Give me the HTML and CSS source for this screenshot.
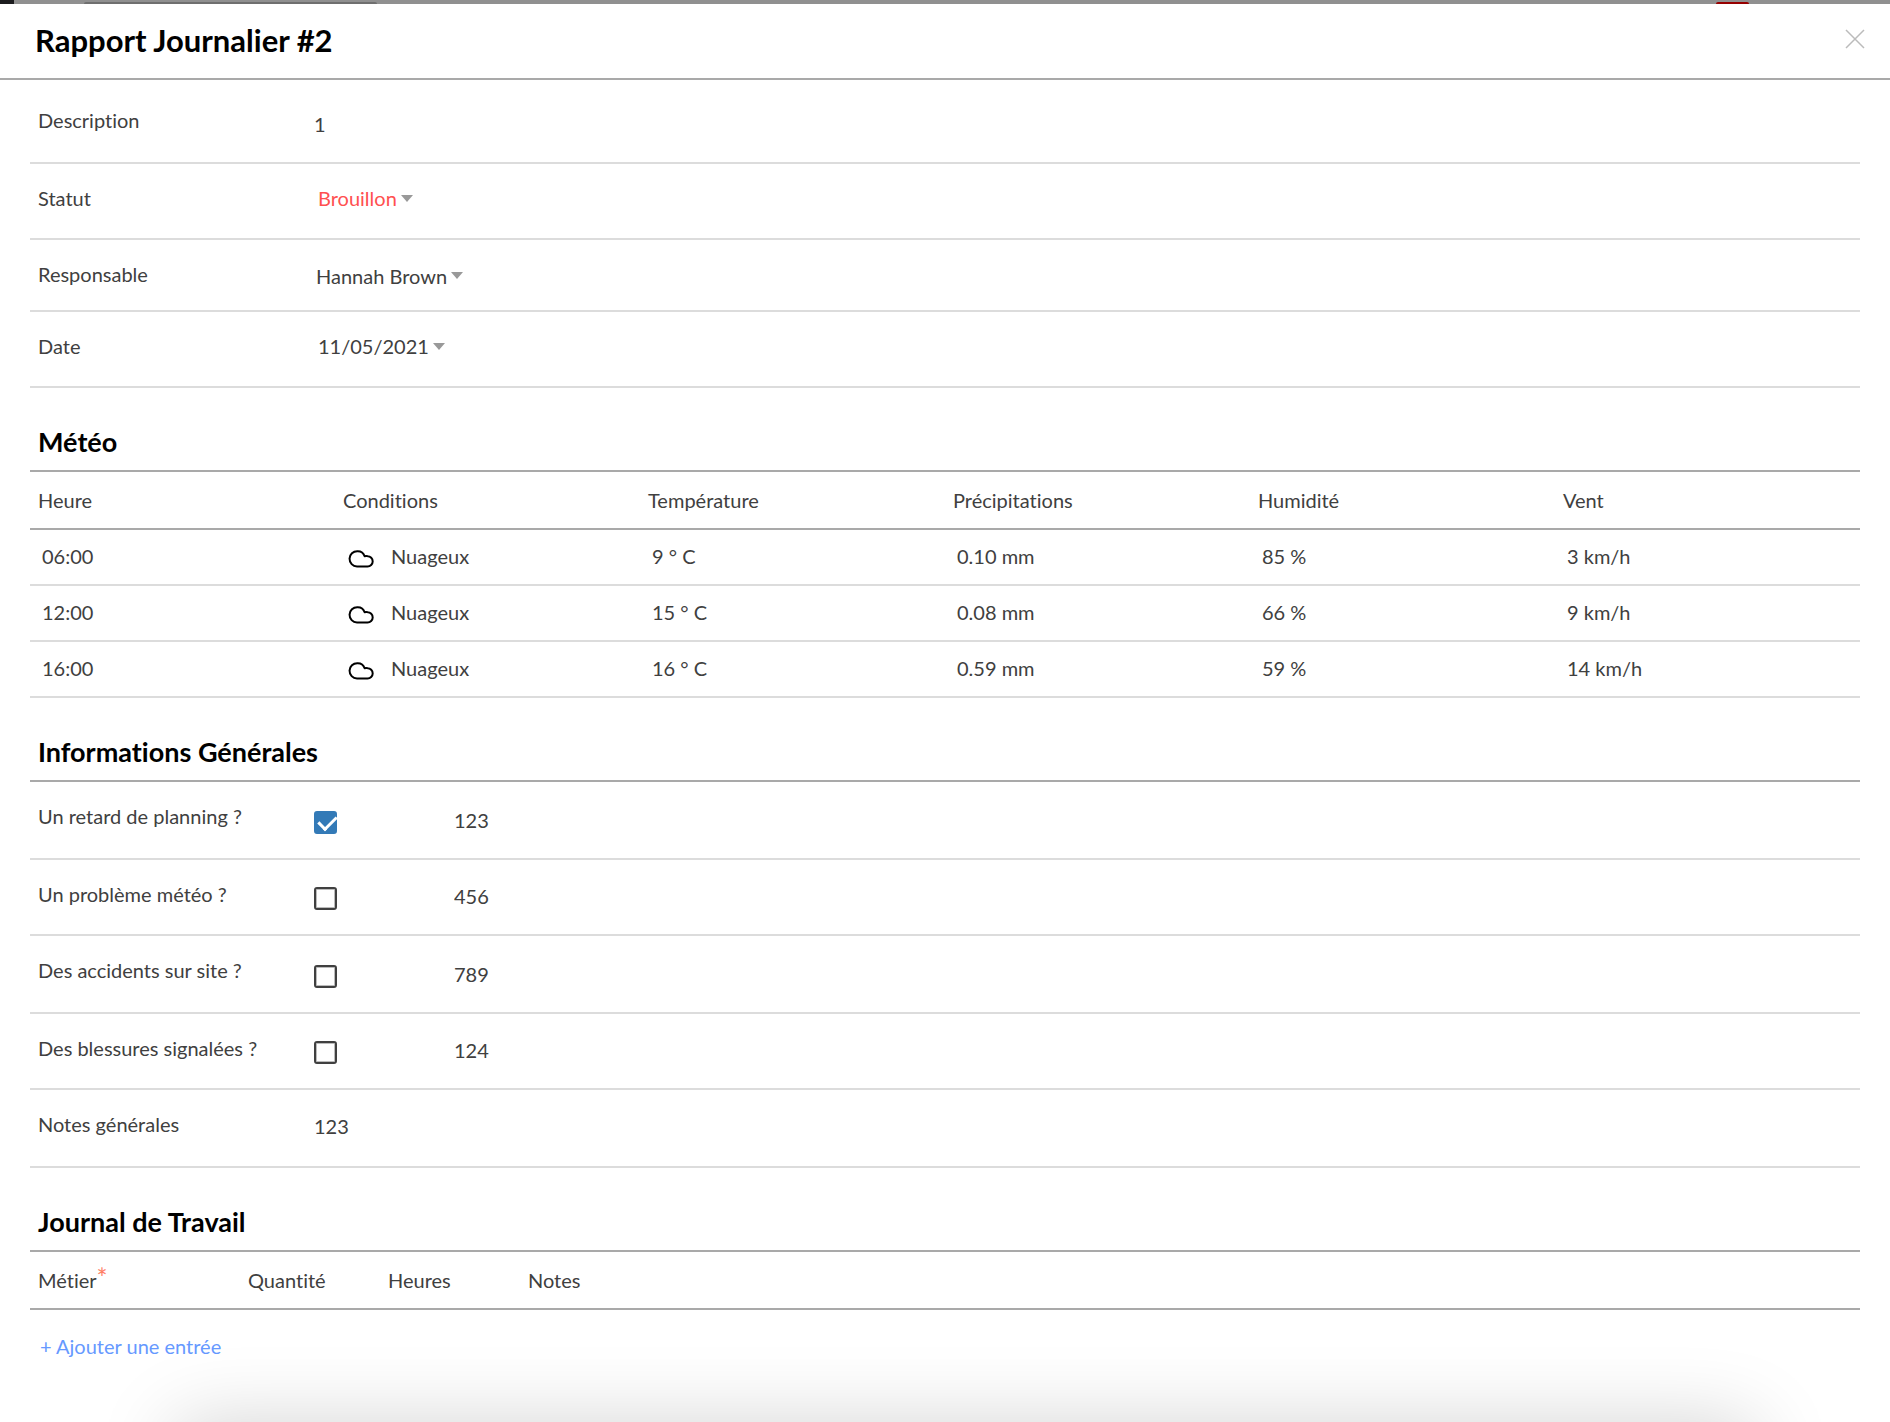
FILE: index.html
```html
<!DOCTYPE html>
<html lang="fr">
  <head>
    <meta charset="UTF-8" />
    <meta name="viewport" content="width=device-width, initial-scale=1.0" />
    <title>Rapport Journalier #2</title>
    <link rel="stylesheet" href="styles.css">
  </head>
  <body>
    <svg width="0" height="0" class="sprite" aria-hidden="true">
      <symbol id="cloud" viewBox="0 0 26 20">
        <path
          d="M9 17.5 H19.5 A5 5 0 0 0 19.6 7.2 Q18.2 6.6 16.6 7.2 A7.3 7.3 0 0 0 9.4 2.2 A7.6 7.6 0 0 0 9 17.5 Z"
          fill="none"
          stroke="#000"
          stroke-width="2"
          stroke-linejoin="round"
        />
      </symbol>
    </svg>

    <div class="backdrop">
      <div class="backdrop-logo"></div>
      <div class="backdrop-search"></div>
      <div class="backdrop-badge"></div>
    </div>

    <div class="modal">
      <div class="modal-header">
        <h1 class="title">Rapport Journalier #2</h1>
        <button type="button" class="close-btn" aria-label="Fermer">
          <svg width="20" height="20" viewBox="0 0 20 20">
            <path d="M1 1 L19 19 M19 1 L1 19" stroke="#bbb" stroke-width="1.5" />
          </svg>
        </button>
      </div>

      <form class="modal-body">
        <div class="row row-tall">
          <label class="label" for="description">Description</label>
          <input type="text" id="description" class="text-input" value="1" />
        </div>
        <div class="row">
          <label class="label" for="status">Statut</label>
          <div class="dropdown">
            <select id="status" class="select draft">
              <option>Brouillon</option>
            </select>
          </div>
        </div>
        <div class="row row-short">
          <label class="label" for="owner">Responsable</label>
          <div class="dropdown">
            <select id="owner" class="select">
              <option>Hannah Brown</option>
            </select>
          </div>
        </div>
        <div class="row">
          <label class="label" for="date">Date</label>
          <div class="dropdown">
            <button type="button" id="date" class="select">11/05/2021</button>
          </div>
        </div>

        <h2 class="section-title">Météo</h2>
        <table class="table weather">
          <thead>
            <tr>
              <th>Heure</th>
              <th>Conditions</th>
              <th>Température</th>
              <th>Précipitations</th>
              <th>Humidité</th>
              <th>Vent</th>
            </tr>
          </thead>
          <tbody>
            <tr>
              <td>06:00</td>
              <td><div class="condition"><svg class="cloud"><use href="#cloud" /></svg>Nuageux</div></td>
              <td>9 ° C</td>
              <td>0.10 mm</td>
              <td>85 %</td>
              <td>3 km/h</td>
            </tr>
            <tr>
              <td>12:00</td>
              <td><div class="condition"><svg class="cloud"><use href="#cloud" /></svg>Nuageux</div></td>
              <td>15 ° C</td>
              <td>0.08 mm</td>
              <td>66 %</td>
              <td>9 km/h</td>
            </tr>
            <tr>
              <td>16:00</td>
              <td><div class="condition"><svg class="cloud"><use href="#cloud" /></svg>Nuageux</div></td>
              <td>16 ° C</td>
              <td>0.59 mm</td>
              <td>59 %</td>
              <td>14 km/h</td>
            </tr>
          </tbody>
        </table>

        <h2 class="section-title">Informations Générales</h2>
        <div class="rows">
          <div class="row row-tall">
            <label class="label" for="delay">Un retard de planning ?</label>
            <div class="check-cell"><input type="checkbox" id="delay" class="checkbox" checked /></div>
            <input type="text" class="text-input" value="123" aria-label="Détail du retard" />
          </div>
          <div class="row">
            <label class="label" for="weather">Un problème météo ?</label>
            <div class="check-cell"><input type="checkbox" id="weather" class="checkbox" /></div>
            <input type="text" class="text-input" value="456" aria-label="Détail du problème météo" />
          </div>
          <div class="row row-tall">
            <label class="label" for="accidents">Des accidents sur site ?</label>
            <div class="check-cell"><input type="checkbox" id="accidents" class="checkbox" /></div>
            <input type="text" class="text-input" value="789" aria-label="Détail des accidents" />
          </div>
          <div class="row">
            <label class="label" for="injuries">Des blessures signalées ?</label>
            <div class="check-cell"><input type="checkbox" id="injuries" class="checkbox" /></div>
            <input type="text" class="text-input" value="124" aria-label="Détail des blessures" />
          </div>
          <div class="row row-notes">
            <label class="label" for="notes">Notes générales</label>
            <input type="text" id="notes" class="text-input" value="123" />
          </div>
        </div>

        <h2 class="section-title">Journal de Travail</h2>
        <table class="table worklog">
          <thead>
            <tr>
              <th class="col-trade">Métier<span class="required">*</span></th>
              <th class="col-number">Quantité</th>
              <th class="col-number">Heures</th>
              <th>Notes</th>
            </tr>
          </thead>
        </table>
        <button type="button" class="add-btn">+ Ajouter une entrée</button>
      </form>
    </div>

    <div class="bottom-panel"></div>
  </body>
</html>
```
FILE: styles.css
```css
:root {
  --text: #404040;
  --line: #dcdcdc;
  --line-dark: #a9a9a9;
}

* {
  box-sizing: border-box;
}

body {
  margin: 0;
  font-family: Lato, sans-serif;
  font-size: 20px;
  line-height: 24px;
  font-variant-ligatures: none;
  color: var(--text);
  background-color: #fff;
  min-height: 100vh;
  overflow-x: hidden;
}

.sprite {
  position: absolute;
}

/* sliver of the page behind the modal */
.backdrop {
  display: flex;
  align-items: flex-end;
  height: 4px;
  background-color: #909090;
}

.backdrop-logo {
  width: 14px;
  height: 4px;
  background-color: #1c1c1e;
}

.backdrop-search {
  width: 293px;
  height: 2px;
  margin-left: 70px;
  background-color: #6f6f6f;
  border-radius: 2px 2px 0 0;
}

.backdrop-badge {
  width: 33px;
  height: 2px;
  margin-left: auto;
  margin-right: 141px;
  background-color: #960000;
  border-radius: 4px 4px 0 0;
}

.modal-header {
  display: flex;
  justify-content: space-between;
  align-items: center;
  height: 76px;
  padding: 0 25px 2px 35px;
  border-bottom: 2px solid var(--line-dark);
}

.title {
  margin: 0;
  font-size: 31px;
  font-weight: 700;
  line-height: 36px;
  color: #000;
}

.close-btn {
  display: flex;
  padding: 0 0 2px;
  border: none;
  background: none;
  cursor: pointer;
}

.modal-body {
  padding: 6px 30px 0;
}

.row {
  display: flex;
  align-items: flex-start;
  min-height: 76px;
  padding-top: 22px;
  border-bottom: 2px solid var(--line);
}

.row-short {
  min-height: 72px;
}

.row-tall,
.row-notes {
  min-height: 78px;
}

.label {
  width: 284px;
  padding-left: 8px;
}

.text-input {
  flex: 1;
  height: 24px;
  margin-top: 2px;
  padding: 0;
  border: none;
  outline: none;
  background: none;
  font: inherit;
  color: inherit;
}

.row-tall .text-input {
  margin-top: 4px;
}

.dropdown {
  display: flex;
  align-items: center;
  gap: 4px;
  padding-left: 4px;
}

.dropdown::after {
  content: "";
  border: 6px solid transparent;
  border-top: 7px solid #999;
  border-bottom: none;
}

.row-short .dropdown {
  align-items: flex-start;
  gap: 3px;
  padding: 2px 0 0 2px;
}

.row-short .dropdown::after {
  margin-top: 8px;
}

.select {
  appearance: none;
  padding: 0;
  border: none;
  background: none;
  font: inherit;
  color: inherit;
  cursor: pointer;
}

.draft {
  color: #ff5050;
}

.check-cell {
  width: 140px;
  padding-top: 5px;
}

.row-tall .check-cell {
  padding-top: 7px;
}

.checkbox {
  appearance: none;
  display: block;
  width: 23px;
  height: 23px;
  margin: 0;
  border: 2px solid #404040;
  border-radius: 3px;
  box-shadow: inset 0 0 0 1px #bbb;
}

.checkbox:checked {
  border-color: #337ab7;
  background-color: #337ab7;
  box-shadow: none;
}

/* check mark */
.checkbox:checked::after {
  content: "";
  display: block;
  width: 8px;
  height: 15px;
  margin: -1px 0 0 6px;
  border: solid #fff;
  border-width: 0 3px 3px 0;
  transform: rotate(45deg);
}

.section-title {
  margin: 0;
  padding: 40px 8px 14px;
  font-size: 27px;
  font-weight: 700;
  line-height: 28px;
  color: #000;
}

.table {
  width: 100%;
  border-collapse: separate;
  border-spacing: 0;
  table-layout: fixed;
  border-top: 2px solid var(--line-dark);
}

.rows {
  border-top: 2px solid var(--line-dark);
}

.table th {
  height: 58px;
  padding: 0 8px;
  font-weight: 400;
  text-align: left;
  border-bottom: 2px solid var(--line-dark);
}

.table td {
  height: 56px;
  padding: 0 12px 2px;
  border-bottom: 2px solid var(--line);
}

.condition {
  display: flex;
  align-items: center;
}

.cloud {
  width: 26px;
  height: 20px;
  margin: 6px 17px 0 1px;
}

.col-trade {
  width: 210px;
}

.col-number {
  width: 140px;
}

.required {
  font-size: 26px;
  line-height: 20px;
  color: #ff7f66;
}

.add-btn {
  margin: 24px 0 0 10px;
  padding: 0;
  border: none;
  background: none;
  font: inherit;
  color: #6699ff;
  cursor: pointer;
}

/* panel tucked under the bottom edge, only its shadow shows */
.bottom-panel {
  position: fixed;
  left: 176px;
  right: 136px;
  bottom: -92px;
  height: 90px;
  box-shadow: 0 0 80px rgba(0, 0, 0, 0.18);
}
```
